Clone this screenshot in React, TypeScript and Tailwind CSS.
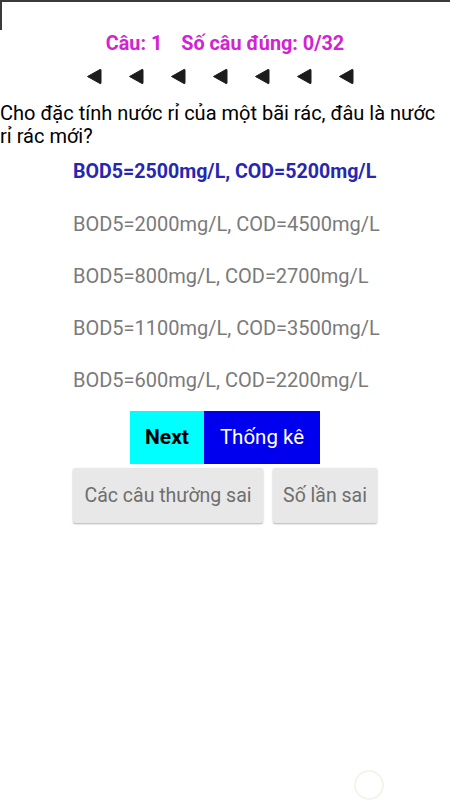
import React from 'react';

const options = [
  'BOD5=2500mg/L, COD=5200mg/L',
  'BOD5=2000mg/L, COD=4500mg/L',
  'BOD5=800mg/L, COD=2700mg/L',
  'BOD5=1100mg/L, COD=3500mg/L',
  'BOD5=600mg/L, COD=2200mg/L',
];

const Arrow: React.FC = () => (
  <svg width="16" height="17" viewBox="0 0 16 17">
    <path d="M1.5 8.5 L14 1.5 Q15 1 15 2.2 L15 14.8 Q15 16 14 15.5 Z" fill="#1c1c1c" stroke="#1c1c1c" strokeWidth="1" strokeLinejoin="round" />
  </svg>
);

const App: React.FC = () => {
  return (
    <div className="relative w-[450px] h-[800px] bg-white overflow-hidden" style={{ fontFamily: 'Roboto, "Noto Sans", sans-serif' }}>
      {/* top edge */}
      <div className="h-[30px] border-t-2 border-l-2 border-[#3a3a3a]" />

      {/* score */}
      <div className="h-[28px] flex items-center justify-center gap-[19px] text-[19.8px] font-bold text-[#d321d3]">
        <span>Câu: 1</span>
        <span>Số câu đúng: 0/32</span>
      </div>

      {/* arrows */}
      <div className="h-[36px] flex items-center pl-[86px] gap-[26px]">
        {Array.from({ length: 7 }).map((_, i) => (
          <Arrow key={i} />
        ))}
      </div>

      {/* question */}
      <p className="text-[20px] leading-[23px] text-black pt-[8px] h-[52px]">
        Cho đặc tính nước rỉ của một bãi rác, đâu là nước rỉ rác mới?
      </p>

      {/* answers */}
      <div className="flex flex-col">
        {options.map((opt, i) => (
          <div
            key={opt}
            className={`h-[52px] flex items-center pl-[73px] ${
              i === 0 ? 'text-[19.6px] font-bold text-[#2626b4]' : 'text-[20px] text-[#7a7a7a]'
            }`}
          >
            {opt}
          </div>
        ))}
      </div>

      {/* actions */}
      <div className="mt-[5px] flex justify-center">
        <button className="w-[74px] h-[53px] bg-[#00ffff] text-[21px] font-bold text-black">Next</button>
        <button className="w-[116px] h-[53px] bg-[#0000ee] text-[20.5px] text-white">Thống kê</button>
      </div>

      <div className="mt-[4px] flex justify-center gap-[10px]">
        <button className="w-[190px] h-[55px] bg-[#e8e8e8] rounded-[2px] shadow-[0_1px_2px_rgba(0,0,0,0.3)] text-[19.5px] text-[#6e6e6e]">
          Các câu thường sai
        </button>
        <button className="w-[104px] h-[55px] bg-[#e8e8e8] rounded-[2px] shadow-[0_1px_2px_rgba(0,0,0,0.3)] text-[19.5px] text-[#6e6e6e]">
          Số lần sai
        </button>
      </div>

      {/* faint floating circle */}
      <div className="absolute left-[354px] top-[770px] w-[30px] h-[30px] rounded-full border-2 border-[#f4f4ea]" />
    </div>
  );
};

export default App;
